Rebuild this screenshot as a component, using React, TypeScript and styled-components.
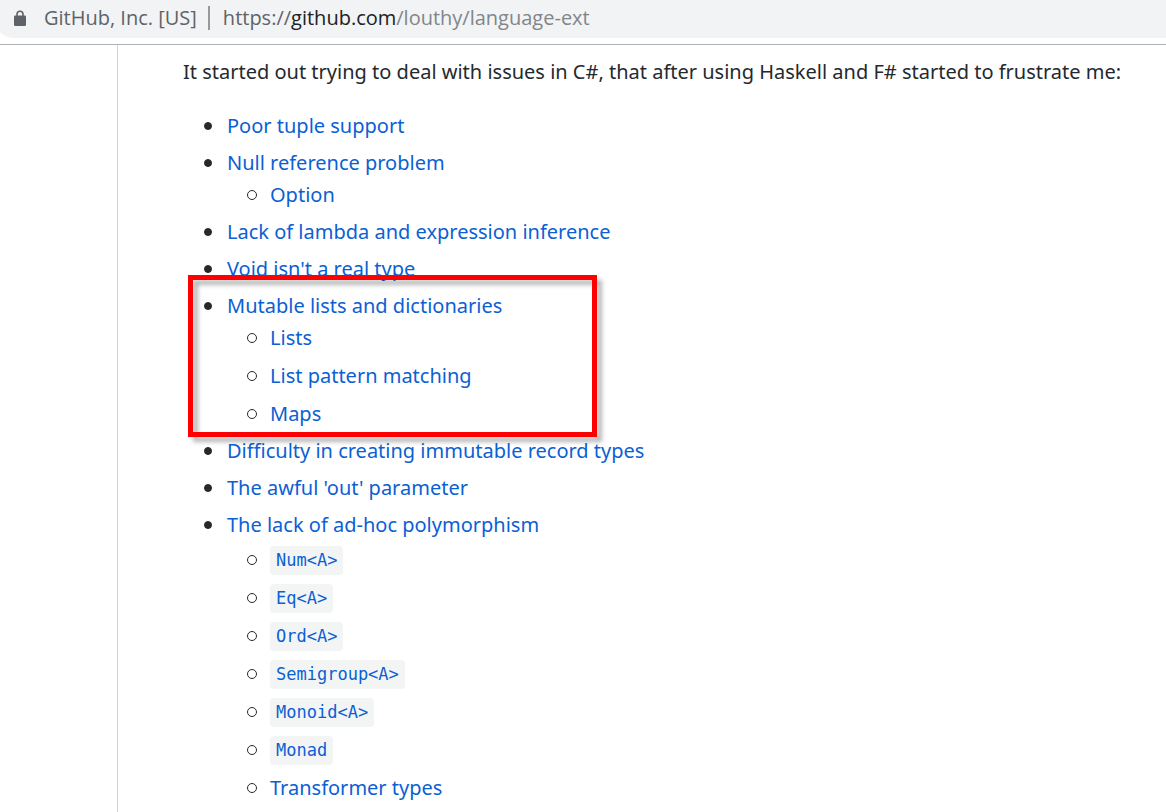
import React from "react";
import styled, { createGlobalStyle } from "styled-components";

const GlobalStyle = createGlobalStyle`
  *, *::before { box-sizing: border-box; }
  html { height: 100%; }
  body {
    margin: 0;
    min-height: 100%;
    background: #fff;
    color: #24292e;
    font-family: "Noto Sans", "Open Sans", sans-serif;
    font-size: 20px;
    line-height: 32px;
  }
`;

const Page = styled.div`
  display: flex;
  flex-direction: column;
  height: 100vh;
  overflow: hidden;
`;

const Toolbar = styled.header`
  flex: none;
  height: 45px;
  border-bottom: 1px solid #b0b1b3;
  overflow: hidden;
  font-family: "Open Sans", "Noto Sans", sans-serif;
`;

const AddressBar = styled.div`
  display: flex;
  align-items: center;
  height: 38px;
  margin-left: -6px;
  padding: 0 0 2px 20px;
  border-bottom-left-radius: 20px;
  background: #f1f3f4;
  color: #5f6368;
  white-space: nowrap;
`;

const LockIcon = styled.svg`
  flex: none;
  width: 12px;
  height: 16px;
  margin-right: 18px;
`;

const Divider = styled.span`
  width: 2px;
  height: 24px;
  margin: 0 13px 0 11px;
  background: #97999c;
`;

const Host = styled.span`
  color: #202124;
`;

const Path = styled.span`
  color: #80868b;
`;

const Body = styled.main`
  flex: 1;
  margin-left: 117px;
  padding: 11px 0 0 65px;
  border-left: 1px solid #d1d5da;
`;

const Intro = styled.p`
  margin: 0 0 22px;
`;

const TopicList = styled.ul`
  display: flex;
  flex-direction: column;
  gap: 5px;
  margin: 0;
  padding: 0 0 0 21px;
  list-style: none;
`;

const SubList = styled.ul<{ $code?: boolean }>`
  display: flex;
  flex-direction: column;
  gap: 6px;
  margin: 0;
  padding: ${(p) => (p.$code ? "3px" : "0")} 0 0 43px;
  list-style: none;
`;

const Item = styled.li`
  position: relative;
`;

const Line = styled.div<{ $hollow?: boolean }>`
  display: flex;
  align-items: center;
  height: 32px;
  white-space: nowrap;

  &::before {
    content: "";
    flex: none;
    width: ${(p) => (p.$hollow ? "10px" : "8px")};
    height: ${(p) => (p.$hollow ? "10px" : "8px")};
    margin-right: ${(p) => (p.$hollow ? "13px" : "15px")};
    border-radius: 50%;
    border: 1px solid #24292e;
    background: ${(p) => (p.$hollow ? "transparent" : "#24292e")};
  }
`;

const TopicLink = styled.a`
  color: #0b60d4;
  text-decoration: none;
`;

const Code = styled.code`
  display: block;
  padding: 0 6px;
  border-radius: 4px;
  background: #f3f5f5;
  font-family: "DejaVu Sans Mono", monospace;
  font-size: 17px;
  line-height: 29px;
`;

const Highlight = styled.div`
  position: absolute;
  top: -15px;
  bottom: -7px;
  left: -16px;
  width: 409px;
  border: 5px solid #fe0000;
  filter: drop-shadow(5px 5px 2px rgba(0, 0, 0, 0.28));
  pointer-events: none;
`;

type Topic = {
  title: string;
  children?: string[];
  code?: string[];
  highlighted?: boolean;
};

const topics: Topic[] = [
  { title: "Poor tuple support" },
  { title: "Null reference problem", children: ["Option"] },
  { title: "Lack of lambda and expression inference" },
  { title: "Void isn't a real type" },
  {
    title: "Mutable lists and dictionaries",
    children: ["Lists", "List pattern matching", "Maps"],
    highlighted: true,
  },
  { title: "Difficulty in creating immutable record types" },
  { title: "The awful 'out' parameter" },
  {
    title: "The lack of ad-hoc polymorphism",
    code: ["Num<A>", "Eq<A>", "Ord<A>", "Semigroup<A>", "Monoid<A>", "Monad"],
    children: ["Transformer types"],
  },
];

function TopicItem({ topic }: { topic: Topic }) {
  return (
    <Item>
      <Line>
        <TopicLink href="#">{topic.title}</TopicLink>
      </Line>
      {topic.children && (
        <SubList $code={!!topic.code}>
          {topic.code?.map((name) => (
            <li key={name}>
              <Line $hollow>
                <TopicLink href="#">
                  <Code>{name}</Code>
                </TopicLink>
              </Line>
            </li>
          ))}
          {topic.children.map((name) => (
            <li key={name}>
              <Line $hollow>
                <TopicLink href="#">{name}</TopicLink>
              </Line>
            </li>
          ))}
        </SubList>
      )}
      {topic.highlighted && <Highlight />}
    </Item>
  );
}

export default function App() {
  return (
    <>
      <GlobalStyle />
      <Page>
        <Toolbar>
          <AddressBar>
            <LockIcon viewBox="0 0 12 16" aria-hidden="true">
              <path
                d="M3 6.500V4.200a3 3 0 0 1 6 0V6.500"
                fill="none"
                stroke="#5f6368"
                strokeWidth="1.600"
              />
              <rect x="0" y="5.500" width="12" height="10.500" rx="1.300" fill="#5f6368" />
            </LockIcon>
            <span>GitHub, Inc. [US]</span>
            <Divider />
            <span>
              https://<Host>github.com</Host>
              <Path>/louthy/language-ext</Path>
            </span>
          </AddressBar>
        </Toolbar>
        <Body>
          <Intro>
            It started out trying to deal with issues in C#, that after using Haskell and F#
            started to frustrate me:
          </Intro>
          <TopicList>
            {topics.map((topic) => (
              <TopicItem key={topic.title} topic={topic} />
            ))}
          </TopicList>
        </Body>
      </Page>
    </>
  );
}
